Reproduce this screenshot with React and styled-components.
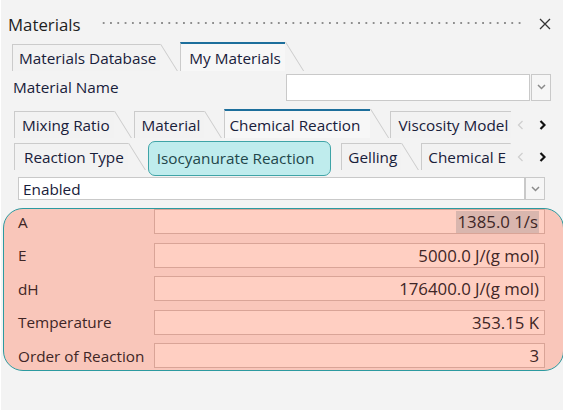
import React from "react";
import styled, { createGlobalStyle } from "styled-components";

const GlobalStyle = createGlobalStyle`
  html, body {
    margin: 0;
    padding: 0;
    background: #ffffff;
  }
  body {
    font-family: "Open Sans", "Noto Sans", "Liberation Sans", sans-serif;
    color: #18203a;
  }
`;

const Panel = styled.div`
  width: 562px;
  height: 410px;
  margin-left: 1px;
  background: #f3f3f3;
  overflow: hidden;
`;

const Header = styled.div`
  height: 40px;
  display: flex;
  align-items: center;
  padding: 8px 12px 0 7px;
  box-sizing: border-box;
`;

const Title = styled.div`
  font-size: 16.8px;
  color: #1e1e1e;
`;

const Grip = styled.div`
  flex: 1;
  height: 12px;
  margin: 0 16px 0 20px;
  background-image: radial-gradient(circle, #8e8e8e 1.1px, transparent 1.4px);
  background-size: 7.3px 8px;
  background-position: 0 1px;
`;

const CloseButton = styled.button`
  border: none;
  background: none;
  padding: 0;
  width: 12px;
  height: 12px;
  display: flex;
  color: #333;
`;

const TabStrip = styled.div`
  display: flex;
  align-items: ${(p) => (p.$top ? "flex-start" : "flex-end")};
  height: ${(p) => p.$height}px;
  margin-top: ${(p) => p.$mt || 0}px;
  margin-left: ${(p) => p.$ml}px;
`;

const TabList = styled.div`
  display: flex;
  align-items: inherit;
  height: 100%;
  width: ${(p) => p.$width}px;
  overflow: hidden;
  flex-shrink: 0;
`;

const Tab = styled.div`
  position: relative;
  flex-shrink: 0;
  box-sizing: border-box;
  height: ${(p) => (p.$selected ? 29 : 27)}px;
  margin-top: ${(p) => p.$mt || 0}px;
  margin-right: 20px;
  padding: 0 ${(p) => p.$pr || 4}px 0 ${(p) => p.$pl || 7}px;
  display: flex;
  align-items: center;
  font-size: 15.3px;
  white-space: nowrap;
  color: #18203a;
  border-left: 1px solid #cbcbcb;
  border-top: ${(p) => (p.$selected ? "2px solid #1d6f9c" : "1px solid #cbcbcb")};
  background: ${(p) => (p.$selected ? "#f7f7f7" : "#f2f2f2")};

  &::after {
    content: "";
    position: absolute;
    left: 100%;
    top: ${(p) => (p.$selected ? -2 : -1)}px;
    bottom: 0;
    width: 0;
    border-right: 1px solid #cbcbcb;
    transform: skewX(32deg);
    transform-origin: top left;
  }
`;

const HighlightTab = styled.div`
  flex-shrink: 0;
  box-sizing: border-box;
  height: 35px;
  margin-right: 10px;
  padding: 0 16px 2px 8px;
  display: flex;
  align-items: center;
  font-size: 15.3px;
  white-space: nowrap;
  color: #22464a;
  background: #bfeced;
  border: 1px solid #3fa4a7;
  border-radius: 7px;
`;

const Arrows = styled.div`
  display: flex;
  align-items: center;
  gap: 15px;
  height: 27px;
  padding-left: 6px;
  align-self: ${(p) => (p.$top ? "auto" : "flex-end")};
  margin-top: ${(p) => p.$mt || 0}px;
`;

const FieldRow = styled.div`
  display: flex;
  align-items: center;
  height: 28px;
  margin-top: 2px;
  padding-left: 12px;
`;

const FieldLabel = styled.div`
  width: 273px;
  font-size: 15.3px;
  color: #18203a;
`;

const Combo = styled.div`
  display: flex;
  height: ${(p) => p.$h}px;
  margin-left: ${(p) => p.$ml || 0}px;
  margin-top: ${(p) => p.$mt || 0}px;
`;

const ComboField = styled.div`
  width: ${(p) => p.$w}px;
  box-sizing: border-box;
  background: #fff;
  border: 1px solid #c9c9c9;
  padding: 0 4px;
  display: flex;
  align-items: center;
  font-size: 15.3px;
  color: #18203a;
`;

const ComboButton = styled.div`
  width: 20px;
  box-sizing: border-box;
  margin-left: ${(p) => p.$gap || 0}px;
  border: 1px solid #c9c9c9;
  background: #f6f6f6;
  display: flex;
  align-items: center;
  justify-content: center;
`;

const Table = styled.div`
  box-sizing: border-box;
  width: 561px;
  height: 163px;
  margin: 8px 0 0 2px;
  padding: 0 18px 0 14px;
  background: #f9c6ba;
  border: 1px solid #2c9aa0;
  border-radius: 20px;
  display: grid;
  grid-template-columns: 136px 391px;
  grid-auto-rows: 25px;
  row-gap: 8.5px;
`;

const RowLabel = styled.div`
  display: flex;
  align-items: center;
  font-size: 15.3px;
  color: #3f2626;
`;

const ValueBox = styled.div`
  box-sizing: border-box;
  background: #ffcfc2;
  border: 1px solid #d9a497;
  display: flex;
  align-items: center;
  justify-content: flex-end;
  padding-right: 5px;
  font-size: 16.8px;
  color: #3f2626;
`;

const Selected = styled.span`
  background: #d9b6ae;
  padding: 0 1px 0 2px;
  line-height: 22px;
`;

const Chevron = ({ dir, color, weight }) => (
  <svg width="7" height="10" viewBox="0 0 7 10">
    <path
      d={dir === "left" ? "M5.5 1 L1.5 5 L5.5 9" : "M1.5 1 L5.5 5 L1.5 9"}
      fill="none"
      stroke={color}
      strokeWidth={weight}
    />
  </svg>
);

const DownChevron = () => (
  <svg width="9" height="6" viewBox="0 0 9 6">
    <path d="M1 1 L4.5 4.5 L8 1" fill="none" stroke="#8a8a8a" strokeWidth="1.5" />
  </svg>
);

const TabArrows = ({ top, mt }) => (
  <Arrows $top={top} $mt={mt}>
    <Chevron dir="left" color="#cfcfcf" weight={1.3} />
    <Chevron dir="right" color="#111" weight={2.2} />
  </Arrows>
);

const rows = [
  { label: "A", value: "1385.0 1/s", selected: true },
  { label: "E", value: "5000.0 J/(g mol)" },
  { label: "dH", value: "176400.0 J/(g mol)" },
  { label: "Temperature", value: "353.15 K" },
  { label: "Order of Reaction", value: "3" },
];

export default function App() {
  return (
    <>
      <GlobalStyle />
      <Panel>
        <Header>
          <Title>Materials</Title>
          <Grip />
          <CloseButton aria-label="Close">
            <svg width="12" height="12" viewBox="0 0 12 12">
              <path d="M1 1 L11 11 M11 1 L1 11" stroke="#333" strokeWidth="1.3" />
            </svg>
          </CloseButton>
        </Header>

        <TabStrip $height={30} $ml={11} $mt={1}>
          <Tab $pl={6}>Materials Database</Tab>
          <Tab $selected $pl={8}>My Materials</Tab>
        </TabStrip>

        <FieldRow>
          <FieldLabel>Material Name</FieldLabel>
          <Combo $h={27}>
            <ComboField $w={244} />
            <ComboButton $gap={1}>
              <DownChevron />
            </ComboButton>
          </Combo>
        </FieldRow>

        <TabStrip $height={30} $ml={13} $mt={7}>
          <TabList $width={497}>
            <Tab>Mixing Ratio</Tab>
            <Tab>Material</Tab>
            <Tab $selected $pl={4} $pr={10}>Chemical Reaction</Tab>
            <Tab>Viscosity Model</Tab>
          </TabList>
          <TabArrows />
        </TabStrip>

        <TabStrip $height={35} $ml={13} $mt={3} $top>
          <TabList $width={497}>
            <Tab $mt={2} $pl={9}>Reaction Type</Tab>
            <HighlightTab>Isocyanurate Reaction</HighlightTab>
            <Tab $mt={2} $pl={6}>Gelling</Tab>
            <Tab $mt={2} $pl={6}>Chemical E</Tab>
          </TabList>
          <TabArrows top mt={2} />
        </TabStrip>

        <Combo $h={23} $ml={17} $mt={1}>
          <ComboField $w={507}>Enabled</ComboField>
          <ComboButton>
            <DownChevron />
          </ComboButton>
        </Combo>

        <Table>
          {rows.map((r) => (
            <React.Fragment key={r.label}>
              <RowLabel>{r.label}</RowLabel>
              <ValueBox>{r.selected ? <Selected>{r.value}</Selected> : r.value}</ValueBox>
            </React.Fragment>
          ))}
        </Table>
      </Panel>
    </>
  );
}
